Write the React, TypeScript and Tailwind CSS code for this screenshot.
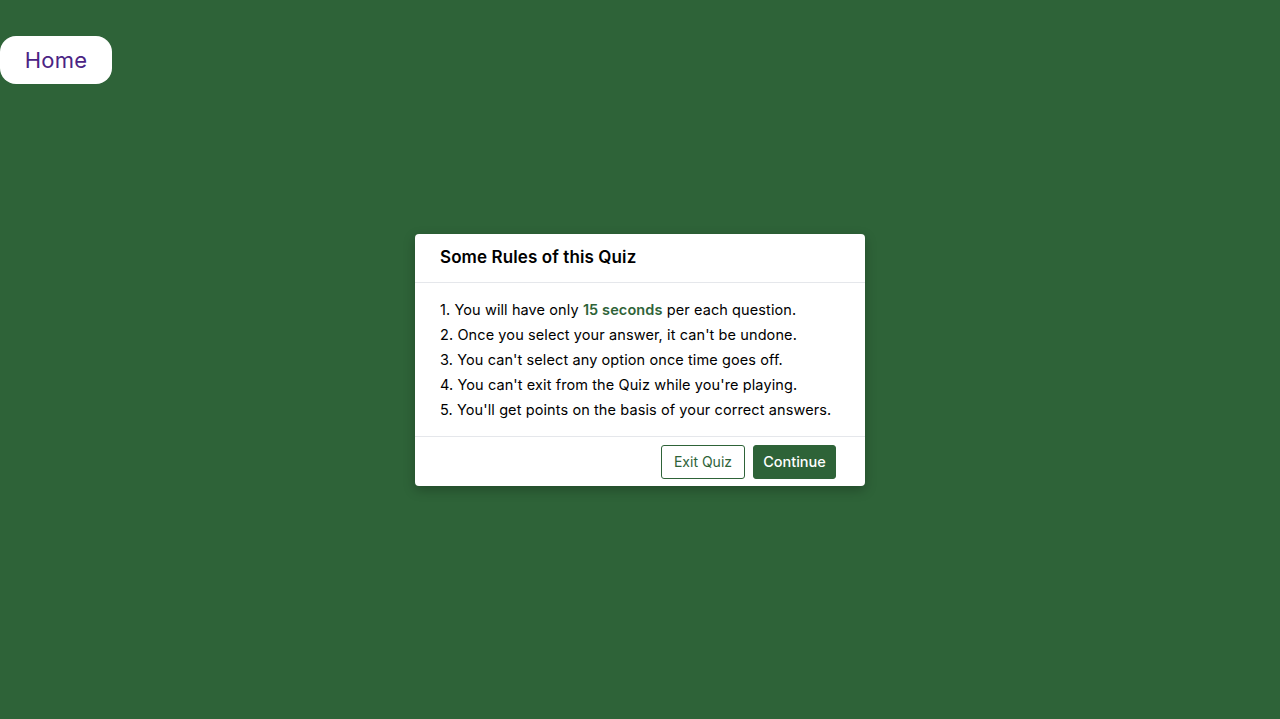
import React from 'react';

const rules = [
  "2. Once you select your answer, it can't be undone.",
  "3. You can't select any option once time goes off.",
  "4. You can't exit from the Quiz while you're playing.",
  "5. You'll get points on the basis of your correct answers.",
];

const App = () => {
  return (
    <div className="min-h-screen w-full bg-[#2e6338] font-['Inter','Open_Sans',sans-serif] pt-9">
      <button className="h-12 w-[112px] rounded-2xl bg-white text-[22px] text-[#4b2384] tracking-[0.2px]">
        Home
      </button>

      <div className="flex justify-center pt-[150px]">
        <div className="w-[450px] rounded-[4px] bg-white shadow-[0_4px_12px_rgba(0,0,0,0.25)]">
          <div className="h-[49px] flex items-center px-[25px] border-b border-[#e5e7eb]">
            <h2 className="text-[17px] font-semibold text-black tracking-[0.1px]">Some Rules of this Quiz</h2>
          </div>
          <div className="px-[25px] pt-[14px] pb-[14px] text-[14.5px] leading-[25px] text-black tracking-[0.1px]">
            <div>
              1. You will have only <span className="font-semibold text-[#2e6338]">15 seconds</span> per each question.
            </div>
            {rules.map((r) => (
              <div key={r}>{r}</div>
            ))}
          </div>
          <div className="h-[50px] flex items-center justify-end gap-2 pr-[29px] border-t border-[#e5e7eb]">
            <button className="h-[34px] w-[84px] rounded-[3px] border border-[#2e6338] bg-white text-[14px] text-[#2e6338]">
              Exit Quiz
            </button>
            <button className="h-[34px] w-[83px] rounded-[3px] border border-[#2e6338] bg-[#2e6338] text-[14.5px] font-medium text-white">
              Continue
            </button>
          </div>
        </div>
      </div>
    </div>
  );
};

export default App;
